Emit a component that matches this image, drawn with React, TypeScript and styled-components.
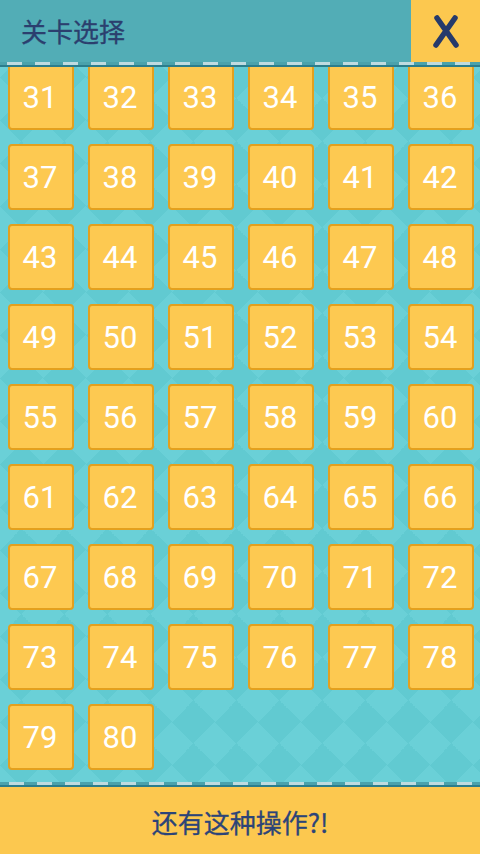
import React from "react";
import styled, { createGlobalStyle } from "styled-components";

const Global = createGlobalStyle`
  html, body { margin: 0; padding: 0; }
  body { width: 480px; height: 854px; overflow: hidden; font-family: Roboto, "Noto Sans CJK SC", sans-serif; }
  #root { height: 854px; }
`;

const Screen = styled.div`
  width: 480px;
  height: 854px;
  display: flex;
  flex-direction: column;
  background: #66ced5;
`;

const Header = styled.header`
  height: 62px;
  display: flex;
  align-items: stretch;
  background: #52adb6;
  flex-shrink: 0;
`;

const Title = styled.h1`
  flex: 1;
  margin: 0;
  padding-left: 21px;
  display: flex;
  align-items: center;
  font-family: "Noto Sans CJK SC", sans-serif;
  font-weight: 400;
  font-size: 26px;
  color: #2b3f6e;
  padding-bottom: 2px;
  -webkit-text-stroke: 0.3px #2b3f6e;
`;

const CloseButton = styled.button`
  width: 69px;
  border: none;
  padding: 0;
  background: #fcc84f;
  display: flex;
  align-items: center;
  justify-content: center;
`;

const DashedRule = styled.div<{ $offset: number }>`
  flex-shrink: 0;
  display: flex;
  flex-direction: column;
  &::before {
    content: "";
    height: 3px;
    background: repeating-linear-gradient(
      90deg,
      #4aa2ac 0 ${(p) => p.$offset}px,
      #bedbe0 ${(p) => p.$offset}px ${(p) => p.$offset + 15}px,
      #4aa2ac ${(p) => p.$offset + 15}px 28px
    );
  }
  &::after {
    content: "";
    height: 2px;
    background: #2b7d8c;
  }
`;

const Board = styled.main`
  flex: 1;
  overflow: hidden;
  background-color: #67cfd6;
  background-image: repeating-conic-gradient(from 45deg at 50% 50%, #6ad0d7 0 25%, #61cad1 0 50%);
  background-size: 43px 43px;
  background-position: 0 10px;
`;

const Grid = styled.div`
  margin-top: -3px;
  padding: 0 6px 0 8px;
  display: grid;
  grid-template-columns: repeat(6, 66px);
  grid-auto-rows: 66px;
  column-gap: 14px;
  row-gap: 14px;
`;

const Level = styled.button`
  box-sizing: border-box;
  width: 66px;
  height: 66px;
  margin: 0;
  padding: 0 2px 0 0;
  border: 2px solid #e3a01e;
  border-radius: 4px;
  background: #fdc951;
  color: #ffffff;
  font-family: Roboto, sans-serif;
  font-size: 31px;
  font-weight: 400;
  display: flex;
  align-items: center;
  justify-content: center;
  line-height: 1;
`;

const Footer = styled.footer`
  height: 67px;
  flex-shrink: 0;
  background: #fcc84f;
  display: flex;
  align-items: center;
  justify-content: center;
  font-family: "Noto Sans CJK SC", sans-serif;
  font-size: 26px;
  color: #2c4478;
  padding-top: 2px;
  box-sizing: border-box;
  -webkit-text-stroke: 0.3px #2c4478;
`;

const levels = Array.from({ length: 50 }, (_, i) => i + 31);

export default function App() {
  return (
    <>
      <Global />
      <Screen>
        <Header>
          <Title>关卡选择</Title>
          <CloseButton aria-label="关闭">
            <svg width="28" height="36" viewBox="0 0 28 36">
              <path d="M5 5 L24 32 M23 5 L4 32" stroke="#263a6b" strokeWidth="5.5" strokeLinecap="round" fill="none" />
            </svg>
          </CloseButton>
        </Header>
        <DashedRule $offset={7} />
        <Board>
          <Grid>
            {levels.map((n) => (
              <Level key={n}>{n}</Level>
            ))}
          </Grid>
        </Board>
        <DashedRule $offset={9} />
        <Footer>还有这种操作?!</Footer>
      </Screen>
    </>
  );
}
